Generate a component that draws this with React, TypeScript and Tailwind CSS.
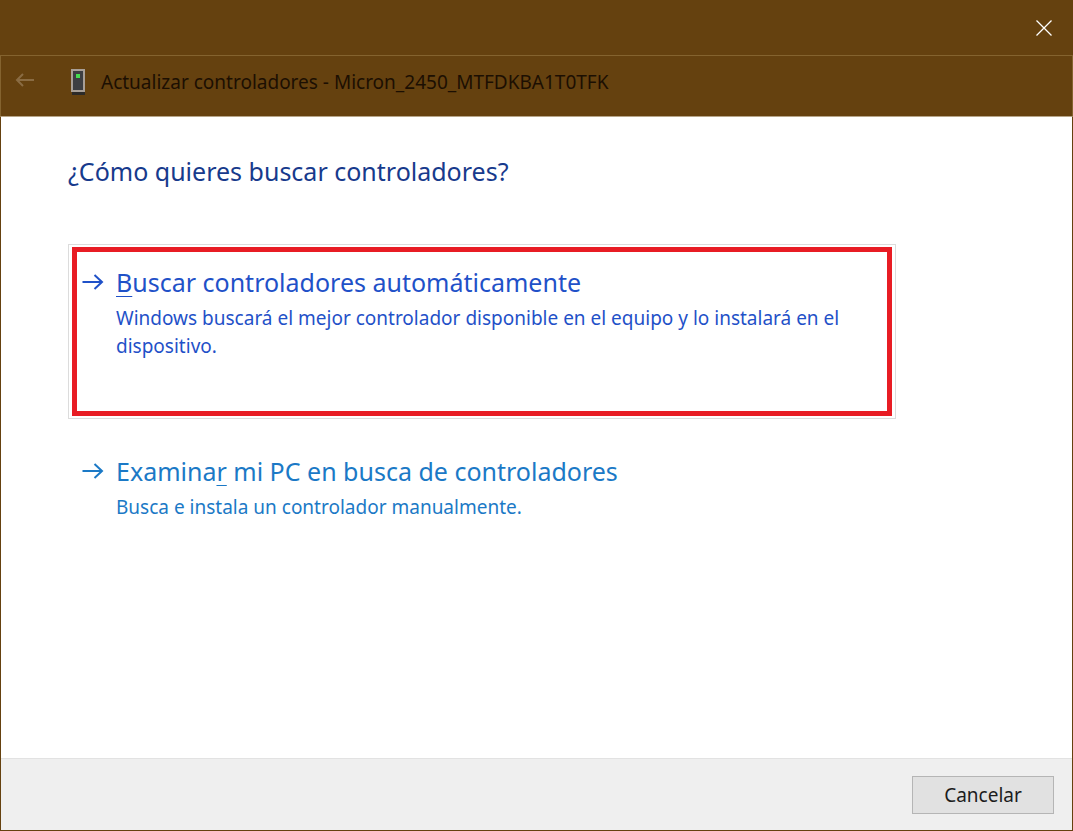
import type { ReactNode } from 'react';

const ArrowRight = () => (
    <svg viewBox="0 0 22 18" className="w-[22px] h-[18px] shrink-0" fill="none" stroke="currentColor" strokeWidth="2" aria-hidden="true">
        <path d="M0.5 9H20M12.5 2L20 9L12.5 16" />
    </svg>
);

const DriveIcon = () => (
    <svg viewBox="0 0 16 28" className="w-4 h-7 shrink-0" aria-hidden="true">
        <rect x="2" y="23" width="13" height="4" fill="#2c2a28" />
        <rect x="1" y="1" width="14" height="23" fill="#a89f97" />
        <rect x="3" y="3" width="10" height="19" fill="#3d3e42" />
        <rect x="6" y="6" width="4" height="4" fill="#45dc50" />
    </svg>
);

type CommandLinkProps = {
    title: ReactNode;
    description: string;
};

const CommandLink = ({ title, description }: CommandLinkProps) => (
    <span className="flex items-start gap-3">
        <span className="flex h-9 items-center">
            <ArrowRight />
        </span>
        <span className="flex-1">
            <span className="block text-[25px] leading-9">{title}</span>
            <span className="mt-1 block text-[19px] leading-7">{description}</span>
        </span>
    </span>
);

const App = () => {
    return (
        <div className="min-h-screen flex flex-col bg-[#65410f] font-['Noto_Sans','Open_Sans',sans-serif]">
            {/* Title bar */}
            <div className="h-[55px] flex items-center justify-end pr-5">
                <button aria-label="Cerrar" className="p-px text-white">
                    <svg viewBox="0 0 16 16" className="w-4 h-4" fill="none" stroke="currentColor" strokeWidth="1.3" aria-hidden="true">
                        <path d="M0.5 0.5L15.5 15.5M15.5 0.5L0.5 15.5" />
                    </svg>
                </button>
            </div>

            {/* Wizard header */}
            <header className="h-[62px] flex items-start border border-[#84632f] border-b-[#b7a588] pl-[14px] pt-3">
                <button aria-label="Atrás" className="mt-[5px] text-[#8a6c43]" disabled>
                    <svg viewBox="0 0 20 14" className="w-5 h-[14px]" fill="none" stroke="currentColor" strokeWidth="2" aria-hidden="true">
                        <path d="M19 7H2M8 1L2 7L8 13" />
                    </svg>
                </button>
                <div className="ml-[35px] flex items-center gap-[15px]">
                    <DriveIcon />
                    <h1 className="text-[19px] leading-7 text-[#1c0f02]">Actualizar controladores - Micron_2450_MTFDKBA1T0TFK</h1>
                </div>
            </header>

            <main className="flex-1 mx-px bg-white pt-9 px-[67px]">
                <h2 className="text-[25px] leading-9 text-[#173a8c]">¿Cómo quieres buscar controladores?</h2>

                <div className="mt-[55px] max-w-[828px] flex flex-col">
                    <button className="border border-[#dcdcdc] px-[3px] py-[2px] text-left text-[#1f51c8]">
                        <span className="block border-[5px] border-[#e81c24] pt-3 pb-[51px] pl-[5px] pr-5">
                            <CommandLink
                                title={<><u className="underline-offset-4 decoration-1">B</u>uscar controladores automáticamente</>}
                                description="Windows buscará el mejor controlador disponible en el equipo y lo instalará en el dispositivo."
                            />
                        </span>
                    </button>
                    <button className="mt-[34px] pl-[14px] pr-7 text-left text-[#1b79c6]">
                        <CommandLink
                            title={<>Examina<u className="underline-offset-4 decoration-1">r</u> mi PC en busca de controladores</>}
                            description="Busca e instala un controlador manualmente."
                        />
                    </button>
                </div>
            </main>

            <footer className="mx-px mb-px h-[72px] flex items-center justify-end bg-[#efefef] border-t border-[#e2e2e2] pr-[18px]">
                <button className="w-[142px] h-[38px] border border-[#b5b5b5] bg-[#e1e1e1] text-[19px] leading-7 text-[#1c1c1c]">Cancelar</button>
            </footer>
        </div>
    );
};

export default App;
